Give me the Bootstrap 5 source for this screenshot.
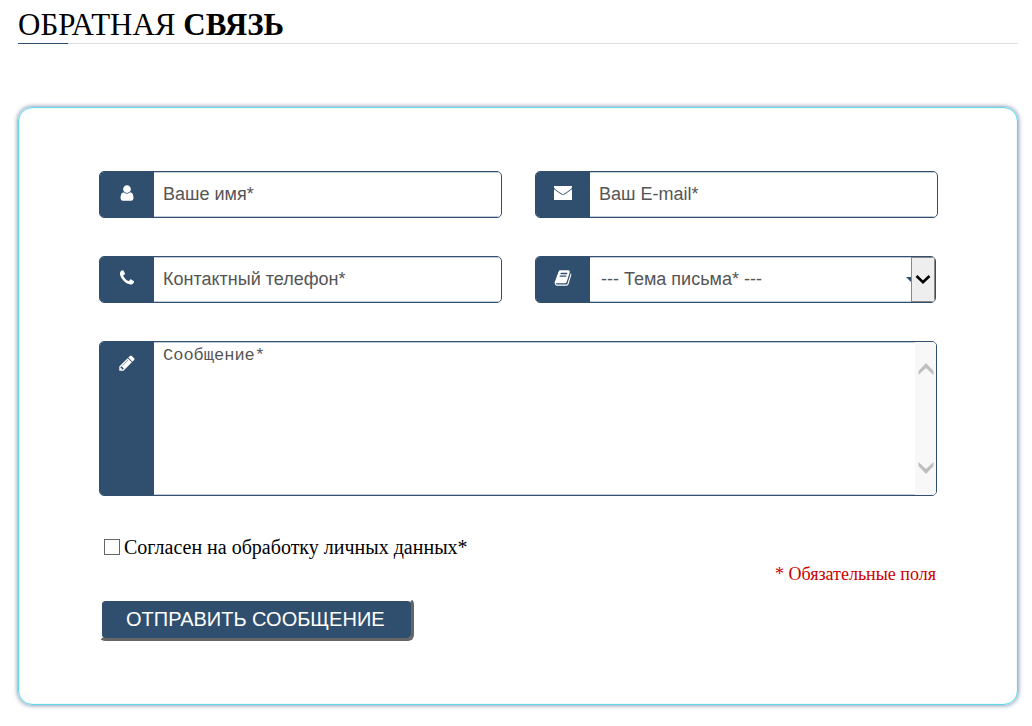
<!DOCTYPE html>
<html lang="ru">
<head>
<meta charset="utf-8">
<meta name="viewport" content="width=device-width, initial-scale=1">
<title>Обратная связь</title>
<link href="https://cdn.jsdelivr.net/npm/bootstrap@5.3.0/dist/css/bootstrap.min.css" rel="stylesheet">
<style>
  :root { --navy: #304f6e; }
  body { background: #fff; color: #000; font-family: "Liberation Serif", serif; padding: 6px 14px 22px 18px; }
  .page-title { font-size: 31px; line-height: 37px; font-weight: 400; border-bottom: 1px solid #ddd; margin-bottom: 63px; position: relative; }
  .page-title::after { content: ""; position: absolute; left: 0; bottom: -1px; width: 50px; height: 1px; background: var(--navy); }
  .feedback { border: 1px solid #62d8ea; border-radius: 14px; box-shadow: 0 0 5px #5f7896, inset 0 0 1px #62d8ea; padding: 63px 79px 63px 80px; }
  .fields { display: grid; grid-template-columns: 1fr 1fr; gap: 38px 33px; }
  .field { border: 1px solid var(--navy); border-radius: 5px; background: #fff; min-height: 47px; overflow: hidden; position: relative; }
  .field-icon { background: var(--navy); width: 54px; flex: none; padding-top: 12px; }
  .field-icon svg { width: 18px; height: 18px; fill: #fff; }
  .field input, .field select, .field textarea {
    border: 0; outline: 0; background: none; color: #555; font-family: "Liberation Sans", sans-serif; font-size: 18px; line-height: 24px;
    flex: 1 1 0; min-width: 0; padding: 0 9px 2px; appearance: none; border-radius: 0; box-shadow: inset 0 1px #c5ced6, inset 0 -1px #c5ced6; }
  .field select { padding-left: 11px; }
  .field ::placeholder { color: #555; opacity: 1; }
  .field textarea { font-family: "Liberation Mono", monospace; font-size: 17px; line-height: 18px; padding: 5px 9px; height: 153px; resize: none; overflow: hidden; }
  .message-field { grid-column: 1 / -1; margin-right: 1px; }
  .topic-field { margin-right: 2px; }
  .field .drop-arrow { right: 0; width: 24px; background: #eee; border: 1px solid #888; }
  .drop-tip { right: 24px; top: 20px; width: 5px; height: 5px; background: var(--navy); clip-path: polygon(0 0, 100% 0, 100% 100%); }
  .scroll-strip { width: 21px; background: #f8f8f8; padding: 21px 0; }
  .agree { font-size: 20px; line-height: 24px; margin: 39px 0 0 5px; }
  .agree input { appearance: none; width: 16px; height: 16px; border: 1px solid #666; background: #fff; margin: 0 4px 5px 0; vertical-align: middle; }
  .agree input:checked { background: var(--navy); }
  .required-note { color: #c00; font-size: 18px; line-height: 26px; margin: 1px 2px 11px 0; }
  .btn.send { font-family: "Liberation Sans", sans-serif; font-size: 20px; line-height: 34px; color: #fff; background: var(--navy); background-clip: padding-box; border: 3px solid; border-color: #fff #666 #666 #fff; border-radius: 6px; padding: 1px 26px 2px 24px; }
</style>
</head>
<body>
<h1 class="page-title">ОБРАТНАЯ <b>СВЯЗЬ</b></h1>
<form class="feedback">
  <div class="fields">
    <div class="field d-flex">
      <label class="field-icon d-flex justify-content-center" for="name" aria-label="Ваше имя"><svg viewBox="0 0 1792 1792"><path d="M1536 1399q0 109-62.5 187t-150.5 78h-854q-88 0-150.5-78t-62.5-187q0-85 8.5-160.5t31.5-152 58.5-131 94-89 134.5-34.5q131 128 313 128t313-128q76 0 134.5 34.5t94 89 58.5 131 31.5 152 8.5 160.5zm-256-887q0 159-112.5 271.5t-271.5 112.5-271.5-112.5-112.5-271.5 112.5-271.5 271.5-112.5 271.5 112.5 112.5 271.5z"/></svg></label>
      <input id="name" type="text" placeholder="Ваше имя*">
    </div>
    <div class="field d-flex">
      <label class="field-icon d-flex justify-content-center" for="email" aria-label="Ваш E-mail"><svg viewBox="0 0 18 18"><path d="M0 2h18v.5c0 1.500-1 2.500-2 3.300l-5 3.500c-1.300.9-2.700.9-4 0l-5-3.500C1 5 0 4 0 2.500zM0 5.200l6.300 4.600c1.800 1.200 3.600 1.200 5.400 0L18 5.200V16H0z"/></svg></label>
      <input id="email" type="email" placeholder="Ваш E-mail*">
    </div>
    <div class="field d-flex">
      <label class="field-icon d-flex justify-content-center" for="phone" aria-label="Контактный телефон"><svg viewBox="0 0 1792 1792"><path d="M1600 1240q0 27-10 70.5t-21 68.5q-21 50-122 106-94 51-186 51-27 0-53-3.5t-57.5-12.5-47-14.5-55.5-20.5-49-18q-98-35-175-83-127-79-264-216t-216-264q-48-77-83-175-3-9-18-49t-20.5-55.5-14.5-47-12.5-57.5-3.5-53q0-92 51-186 56-101 106-122 25-11 68.5-21t70.5-10q14 0 21 3 18 6 53 76 11 19 30 54t35 63.5 31 53.5q3 4 17.5 25t21.5 35.5 7 28.5q0 20-28.5 50t-62 55-62 53-28.5 46q0 9 5 22.5t8.5 20.5 14 24 11.5 19q76 137 174 235t235 174q2 1 19 11.5t24 14 20.5 8.5 22.5 5q18 0 46-28.5t53-62 55-62 50-28.5q14 0 28.5 7t35.5 21.5 25 17.5q25 15 53.5 31t63.5 35 54 30q70 35 76 53 3 7 3 21z"/></svg></label>
      <input id="phone" type="tel" placeholder="Контактный телефон*">
    </div>
    <div class="field topic-field d-flex">
      <label class="field-icon d-flex justify-content-center" for="topic" aria-label="Тема письма"><svg viewBox="0 0 1792 1792"><path d="M1703 478q40 57 18 129l-275 906q-19 64-76.5 107.5t-122.5 43.5h-923q-77 0-148.5-53.5t-99.5-131.5q-24-67-2-127 0-4 3-27t4-37q1-8-3-21.5t-3-19.5q2-11 8-21t16.5-23.5 16.5-23.5q23-38 45-91.5t30-91.5q3-10 .5-30t-.5-28q3-11 17-28t17-23q21-36 42-92t25-90q1-9-2.5-32t.5-28q4-13 22-30.5t22-22.5q19-26 42.5-84.5t27.5-96.5q1-8-3-25.5t-2-26.5q2-8 9-18t18-23 17-21q8-12 16.5-30.5t15-35 16-36 19.5-32 26.5-23.5 36-11.5 47.5 5.5l-1 3q38-9 51-9h761q74 0 114 56t18 130l-274 906q-36 119-71.5 153.5t-128.5 34.5h-869q-27 0-38 15-11 16-1 43 24 70 144 70h923q29 0 56-15.5t35-41.5l300-987q7-22 5-57 38 15 59 43zm-1064 2q-4 13 2 22.5t20 9.5h608q13 0 25.5-9.5t16.5-22.5l21-64q4-13-2-22.5t-20-9.5h-608q-13 0-25.5 9.5t-16.5 22.5zm-83 256q-4 13 2 22.5t20 9.5h608q13 0 25.5-9.5t16.5-22.5l21-64q4-13-2-22.5t-20-9.5h-608q-13 0-25.5 9.5t-16.5 22.5z"/></svg></label>
      <select id="topic"><option>--- Тема письма* ---</option></select>
      <span class="drop-tip position-absolute"></span>
      <span class="drop-arrow position-absolute top-0 bottom-0 d-flex align-items-center justify-content-center pe-none"><svg width="16" height="10" viewBox="0 0 16 10"><path d="M1.500 1L8 7.300 14.500 1" fill="none" stroke="#000" stroke-width="2.600"/></svg></span>
    </div>
    <div class="field message-field d-flex">
      <label class="field-icon d-flex justify-content-center" for="message" aria-label="Сообщение"><svg viewBox="0 0 1792 1792"><path d="M491 1536l91-91-235-235-91 91v107h128v128h107zm523-928q0-22-22-22-10 0-17 7l-542 542q-7 7-7 17 0 22 22 22 10 0 17-7l542-542q7-7 7-17zm-54-192l416 416-832 832h-416v-416zm683 96q0 53-37 90l-166 166-416-416 166-165q36-38 90-38 53 0 91 38l235 234q37 39 37 91z"/></svg></label>
      <textarea id="message" placeholder="Сообщение*"></textarea>
      <div class="scroll-strip d-flex flex-column align-items-center justify-content-between">
        <svg width="16" height="12" viewBox="0 0 16 12"><path d="M.5 8L8 0l7.500 8v4L8 5 .5 12z" fill="#bfbfbf"/></svg>
        <svg width="16" height="12" viewBox="0 0 16 12"><path d="M.5 4L8 12l7.500-8V0L8 7 .5 0z" fill="#bfbfbf"/></svg>
      </div>
    </div>
  </div>
  <div class="agree"><input id="agree" type="checkbox"><label for="agree">Согласен на обработку личных данных*</label></div>
  <p class="required-note text-end">* Обязательные поля</p>
  <button type="submit" class="btn send">ОТПРАВИТЬ СООБЩЕНИЕ</button>
</form>
<script src="https://cdn.jsdelivr.net/npm/bootstrap@5.3.0/dist/js/bootstrap.bundle.min.js"></script>
</body>
</html>
